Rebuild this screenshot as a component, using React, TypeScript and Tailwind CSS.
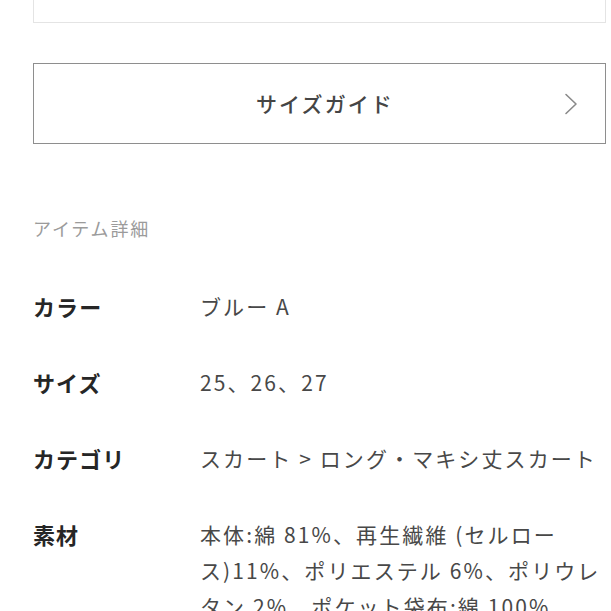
const font = {
  fontFamily: '"Noto Sans CJK JP", "Noto Sans", sans-serif',
};

type Row = { label: string; value: string };

const rows: Row[] = [
  { label: "カラー", value: "ブルー A" },
  { label: "サイズ", value: "25、26、27" },
  { label: "カテゴリ", value: "スカート > ロング・マキシ丈スカート" },
  {
    label: "素材",
    value:
      "本体:綿 81%、再生繊維 (セルロース)11%、ポリエステル 6%、ポリウレタン 2%、ポケット袋布:綿 100%",
  },
];

function ChevronRight() {
  return (
    <svg width="14" height="22" viewBox="0 0 14 22" fill="none">
      <path
        d="M2 1.5 L12 11 L2 20.5"
        stroke="#8a8a8a"
        strokeWidth="1.6"
        strokeLinecap="round"
        strokeLinejoin="round"
      />
    </svg>
  );
}

export default function App() {
  return (
    <div className="h-[611px] w-[611px] overflow-hidden bg-white" style={font}>
      <div className="ml-[33px] w-[573px]">
        <div className="h-[23px] border-x border-b border-[#e4e4e4]" />

        <button className="mt-[40px] flex h-[81px] w-full items-center justify-between border-[1.5px] border-[#8e8e8e] bg-white pl-[52px] pr-[27px]">
          <span className="flex-1 text-center text-[21px] font-medium tracking-[0.1em] text-[#454545]">
            サイズガイド
          </span>
          <ChevronRight />
        </button>

        <h3 className="mt-[72px] text-[18px] leading-[24px] tracking-[0.1em] text-[#9b9b9b]">
          アイテム詳細
        </h3>

        <dl className="mt-[48px] flex flex-col gap-[40px]">
          {rows.map((row) => (
            <div key={row.label} className="flex">
              <dt className="w-[167px] shrink-0 text-[22px] font-bold leading-[36px] tracking-[0.05em] text-[#262626]">
                {row.label}
              </dt>
              <dd className="flex-1 text-[21px] leading-[36px] tracking-[0.1em] text-[#484848]">
                {row.value}
              </dd>
            </div>
          ))}
        </dl>
      </div>
    </div>
  );
}
